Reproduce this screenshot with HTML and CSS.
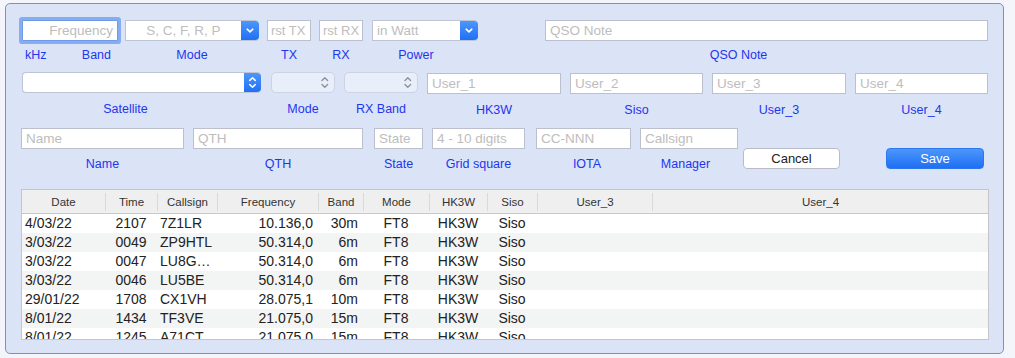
FILE: index.html
```html
<!DOCTYPE html>
<html>
<head>
<meta charset="utf-8">
<link rel="stylesheet" href="styles.css">
</head>
<body>
<div class="panel">
  <div class="row row1">
    <div class="field f-freq">
      <input class="inp inp-focus inp-right" placeholder="Frequency">
      <div class="lbl lbl-split"><span>kHz</span><span>Band</span></div>
    </div>
    <div class="field f-band">
      <div class="sel sel-sq">
        <span class="sel-text sel-center">S, C, F, R, P</span>
        <span class="sel-btn"><svg width="18" height="21" viewBox="0 0 18 21"><path d="M6.2 9.2 L9 11.8 L11.8 9.2" fill="none" stroke="#fff" stroke-width="1.6" stroke-linecap="round" stroke-linejoin="round"/></svg></span>
      </div>
      <div class="lbl">Mode</div>
    </div>
    <div class="field f-tx">
      <input class="inp inp-tight" placeholder="rst TX">
      <div class="lbl">TX</div>
    </div>
    <div class="field f-rx">
      <input class="inp inp-tight" placeholder="rst RX">
      <div class="lbl">RX</div>
    </div>
    <div class="field f-power">
      <div class="sel sel-sq">
        <span class="sel-text">in Watt</span>
        <span class="sel-btn"><svg width="18" height="21" viewBox="0 0 18 21"><path d="M6.2 9.2 L9 11.8 L11.8 9.2" fill="none" stroke="#fff" stroke-width="1.6" stroke-linecap="round" stroke-linejoin="round"/></svg></span>
      </div>
      <div class="lbl lbl-power">Power</div>
    </div>
    <div class="field f-qso">
      <input class="inp" placeholder="QSO Note">
      <div class="lbl lbl-qso">QSO Note</div>
    </div>
  </div>

  <div class="row row2">
    <div class="field f-sat">
      <div class="sel sel-round">
        <span class="sel-text"></span>
        <span class="sel-btn sel-btn-wide"><svg width="17" height="21" viewBox="0 0 17 21"><path d="M5.8 8.4 L8.5 5.8 L11.2 8.4 M5.8 12.6 L8.5 15.2 L11.2 12.6" fill="none" stroke="#fff" stroke-width="1.5" stroke-linecap="round" stroke-linejoin="round"/></svg></span>
      </div>
      <div class="lbl lbl-sat">Satellite</div>
    </div>
    <div class="field f-mode2">
      <div class="sel-dis"><svg width="16" height="21" viewBox="0 0 16 21"><path d="M5 8.4 L7.8 5.8 L10.6 8.4 M5 12.6 L7.8 15.2 L10.6 12.6" fill="none" stroke="#8d9199" stroke-width="1.4" stroke-linecap="round" stroke-linejoin="round"/></svg></div>
      <div class="lbl">Mode</div>
    </div>
    <div class="field f-rxband">
      <div class="sel-dis"><svg width="16" height="21" viewBox="0 0 16 21"><path d="M5 8.4 L7.8 5.8 L10.6 8.4 M5 12.6 L7.8 15.2 L10.6 12.6" fill="none" stroke="#8d9199" stroke-width="1.4" stroke-linecap="round" stroke-linejoin="round"/></svg></div>
      <div class="lbl">RX Band</div>
    </div>
    <div class="field f-user1">
      <input class="inp inp-low" placeholder="User_1">
      <div class="lbl">HK3W</div>
    </div>
    <div class="field f-user2">
      <input class="inp inp-low" placeholder="User_2">
      <div class="lbl">Siso</div>
    </div>
    <div class="field f-user3">
      <input class="inp inp-low" placeholder="User_3">
      <div class="lbl">User_3</div>
    </div>
    <div class="field f-user4">
      <input class="inp inp-low" placeholder="User_4">
      <div class="lbl">User_4</div>
    </div>
  </div>

  <div class="row row3">
    <div class="field f-name">
      <input class="inp" placeholder="Name">
      <div class="lbl">Name</div>
    </div>
    <div class="field f-qth">
      <input class="inp" placeholder="QTH">
      <div class="lbl">QTH</div>
    </div>
    <div class="field f-state">
      <input class="inp" placeholder="State">
      <div class="lbl">State</div>
    </div>
    <div class="field f-grid">
      <input class="inp" placeholder="4 - 10 digits">
      <div class="lbl">Grid square</div>
    </div>
    <div class="field f-iota">
      <input class="inp" placeholder="CC-NNN">
      <div class="lbl lbl-iota">IOTA</div>
    </div>
    <div class="field f-mgr">
      <input class="inp" placeholder="Callsign">
      <div class="lbl lbl-mgr">Manager</div>
    </div>
    <button class="btn btn-cancel">Cancel</button>
    <button class="btn btn-save">Save</button>
  </div>

  <div class="table">
    <div class="thead">
      <div class="th">Date</div>
      <div class="th sep">Time</div>
      <div class="th sep">Callsign</div>
      <div class="th sep">Frequency</div>
      <div class="th sep">Band</div>
      <div class="th sep">Mode</div>
      <div class="th sep">HK3W</div>
      <div class="th sep">Siso</div>
      <div class="th sep">User_3</div>
      <div class="th sep">User_4</div>
    </div>
    <div class="tr">
      <div class="td c-date">4/03/22</div><div class="td c-time">2107</div><div class="td c-call">7Z1LR</div><div class="td c-freq">10.136,0</div><div class="td c-band">30m</div><div class="td c-mid">FT8</div><div class="td c-mid">HK3W</div><div class="td c-mid">Siso</div><div class="td"></div><div class="td"></div>
    </div>
    <div class="tr">
      <div class="td c-date">3/03/22</div><div class="td c-time">0049</div><div class="td c-call">ZP9HTL</div><div class="td c-freq">50.314,0</div><div class="td c-band">6m</div><div class="td c-mid">FT8</div><div class="td c-mid">HK3W</div><div class="td c-mid">Siso</div><div class="td"></div><div class="td"></div>
    </div>
    <div class="tr">
      <div class="td c-date">3/03/22</div><div class="td c-time">0047</div><div class="td c-call">LU8G…</div><div class="td c-freq">50.314,0</div><div class="td c-band">6m</div><div class="td c-mid">FT8</div><div class="td c-mid">HK3W</div><div class="td c-mid">Siso</div><div class="td"></div><div class="td"></div>
    </div>
    <div class="tr">
      <div class="td c-date">3/03/22</div><div class="td c-time">0046</div><div class="td c-call">LU5BE</div><div class="td c-freq">50.314,0</div><div class="td c-band">6m</div><div class="td c-mid">FT8</div><div class="td c-mid">HK3W</div><div class="td c-mid">Siso</div><div class="td"></div><div class="td"></div>
    </div>
    <div class="tr">
      <div class="td c-date">29/01/22</div><div class="td c-time">1708</div><div class="td c-call">CX1VH</div><div class="td c-freq">28.075,1</div><div class="td c-band">10m</div><div class="td c-mid">FT8</div><div class="td c-mid">HK3W</div><div class="td c-mid">Siso</div><div class="td"></div><div class="td"></div>
    </div>
    <div class="tr">
      <div class="td c-date">8/01/22</div><div class="td c-time">1434</div><div class="td c-call">TF3VE</div><div class="td c-freq">21.075,0</div><div class="td c-band">15m</div><div class="td c-mid">FT8</div><div class="td c-mid">HK3W</div><div class="td c-mid">Siso</div><div class="td"></div><div class="td"></div>
    </div>
    <div class="tr">
      <div class="td c-date">8/01/22</div><div class="td c-time">1245</div><div class="td c-call">A71CT</div><div class="td c-freq">21.075,0</div><div class="td c-band">15m</div><div class="td c-mid">FT8</div><div class="td c-mid">HK3W</div><div class="td c-mid">Siso</div><div class="td"></div><div class="td"></div>
    </div>
  </div>
</div>
</body>
</html>
```
FILE: styles.css
```css
* { box-sizing: border-box; }
html, body {
  margin: 0;
  padding: 0;
  width: 1015px;
  height: 358px;
  overflow: hidden;
  background: #f4f4fb;
  font-family: "Liberation Sans", Arial, sans-serif;
}
.panel {
  margin: 3px 0 0 5px;
  width: 999px;
  height: 351px;
  border: 1px solid #7f8bd9;
  border-radius: 5px;
  background: #dbe3f7;
  padding: 16px 0 0 16px;
}
.row {
  display: flex;
  align-items: flex-start;
}
.row2 { margin-top: 9px; }
.row3 { margin-top: 10px; }
.field {
  display: flex;
  flex-direction: column;
}
.lbl {
  font-size: 12.5px;
  line-height: 15px;
  color: #1e36ee;
  text-align: center;
  white-space: nowrap;
  margin-top: 7px;
}
.row2 .lbl { margin-top: 9px; }
.row3 .lbl { margin-top: 8px; }
.lbl-split {
  display: flex;
  justify-content: space-between;
  padding: 0 7px 0 3px;
}
.lbl-power { padding-right: 18px; }
.lbl-qso { padding-right: 56px; }
.lbl-sat { padding-right: 32px; }
.lbl-iota { padding-left: 7px; }
.lbl-mgr { padding-right: 7px; }

.inp {
  display: block;
  width: 100%;
  height: 21px;
  margin: 0;
  border: 1px solid #bcc0cd;
  border-radius: 0;
  background: #fff;
  padding: 0 4px;
  font-family: "Liberation Sans", Arial, sans-serif;
  font-size: 13.5px;
  color: #222;
  outline: none;
}
.inp::placeholder { color: #bdbdbd; }
.inp-tight { padding: 0 2px 0 3px; font-size: 13px; }
.inp-right { text-align: right; }
.inp-focus {
  border: 1px solid #6f9ae6;
  box-shadow: 0 0 0 3px #86adf1;
  border-radius: 1px;
}
.inp-low { margin-top: 1px; height: 21px; }

.sel {
  display: flex;
  height: 21px;
  border: 1px solid #bfc4d2;
  border-right: none;
  background: #fff;
  overflow: hidden;
}
.sel-sq { border-radius: 1px 4px 4px 1px; }
.sel-round { border-radius: 4px; }
.sel-text {
  flex: 1;
  font-size: 13.5px;
  line-height: 19px;
  color: #bdbdbd;
  padding-left: 4px;
  white-space: nowrap;
}
.sel-center { text-align: center; padding-left: 0; }
.sel-btn {
  width: 18px;
  margin: -1px 0;
  height: 21px;
  display: flex;
  align-items: center;
  justify-content: center;
  border-radius: 0 4px 4px 0;
  background: linear-gradient(#4f98fb, #1e6ef6);
}
.sel-btn-wide { width: 17px; }
.sel-dis {
  height: 21px;
  border: 1px solid #cdd3e3;
  border-radius: 5px;
  background: #e9eefb;
  display: flex;
  justify-content: flex-end;
  align-items: center;
  padding-right: 1px;
}

.f-freq { width: 96px; }
.f-band { width: 134px; margin-left: 7px; }
.f-tx { width: 44px; margin-left: 8px; }
.f-rx { width: 44px; margin-left: 8px; }
.f-power { width: 106px; margin-left: 9px; }
.f-qso { width: 443px; margin-left: 67px; }

.f-sat { width: 239px; }
.f-mode2 { width: 64px; margin-left: 10px; }
.f-rxband { width: 74px; margin-left: 9px; }
.f-user1 { width: 134px; margin-left: 9px; }
.f-user2 { width: 133px; margin-left: 9px; }
.f-user3 { width: 134px; margin-left: 9px; }
.f-user4 { width: 133px; margin-left: 9px; }

.f-name { width: 163px; margin-left: -1px; }
.f-qth { width: 170px; margin-left: 9px; }
.f-state { width: 49px; margin-left: 11px; }
.f-grid { width: 93px; margin-left: 9px; }
.f-iota { width: 95px; margin-left: 11px; }
.f-mgr { width: 98px; margin-left: 9px; }

.btn {
  margin-top: 20px;
  height: 21px;
  padding: 0;
  font-family: "Liberation Sans", Arial, sans-serif;
  font-size: 13px;
  line-height: 19px;
  border-radius: 4px;
  text-align: center;
}
.btn-cancel {
  width: 97px;
  margin-left: 5px;
  background: #fff;
  border: 1px solid #b9bcc6;
  color: #222;
}
.btn-save {
  width: 98px;
  margin-left: 46px;
  background: linear-gradient(#4c97fb, #1f6ff5);
  border: 1px solid #2c76ee;
  color: #fff;
}

.table {
  margin: 17px 0 0 -1px;
  width: 968px;
  height: 151px;
  border: 1px solid #c6c6c6;
  background: #fff;
  overflow: hidden;
}
.thead, .tr {
  display: grid;
  grid-template-columns: 83px 52px 60px 101px 45px 66px 58px 50px 115px 1fr;
}
.thead {
  height: 24px;
  background: #efefef;
  border-bottom: 1px solid #c8c8c8;
  align-items: center;
}
.th {
  height: 18px;
  font-size: 11.5px;
  line-height: 18px;
  color: #333;
  text-align: center;
}
.th.sep { border-left: 1px solid #d9d9d9; }
.tr {
  height: 19px;
  font-size: 14px;
  line-height: 19px;
  color: #222;
}
.tr:nth-child(odd) { background: #f3f4f4; }
.td { white-space: nowrap; overflow: hidden; }
.c-date { padding-left: 3px; }
.c-time { text-align: center; }
.c-call { padding-left: 3px; }
.c-freq { text-align: right; padding-right: 5px; }
.c-band { text-align: right; padding-right: 5px; }
.c-mid { text-align: center; }
```
